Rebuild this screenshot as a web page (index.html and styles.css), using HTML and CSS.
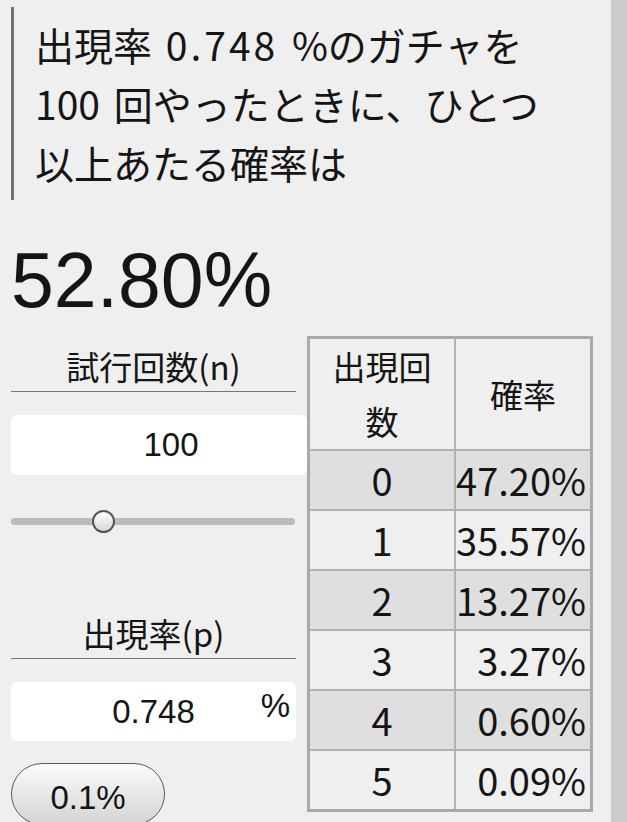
FILE: index.html
```html
<!DOCTYPE html>
<html lang="ja">
<head>
<meta charset="utf-8">
<title>ガチャ確率計算</title>
<link rel="stylesheet" href="styles.css">
</head>
<body>
<div class="page">
  <div class="main">
    <blockquote class="question">出現率 <span class="num">0.748</span> %のガチャを<br>100 回やったときに、ひとつ<br>以上あたる確率は</blockquote>
    <div class="result">52.80%</div>
    <div class="panel">
      <div class="controls">
        <div class="label">試行回数(n)</div>
        <div class="field field-n"><input type="text" value="100"></div>
        <input type="range" class="slider" min="10" max="300" value="100">
        <div class="label label-p">出現率(p)</div>
        <div class="field field-p"><input type="text" value="0.748"><span class="unit">%</span></div>
        <button class="preset">0.1%</button>
      </div>
      <table class="dist">
        <tr class="head">
          <th class="col-k">出現回<br>数</th>
          <th>確率</th>
        </tr>
        <tr class="alt"><td class="col-k">0</td><td class="prob">47.20%</td></tr>
        <tr><td class="col-k">1</td><td class="prob">35.57%</td></tr>
        <tr class="alt"><td class="col-k">2</td><td class="prob">13.27%</td></tr>
        <tr><td class="col-k">3</td><td class="prob">3.27%</td></tr>
        <tr class="alt"><td class="col-k">4</td><td class="prob">0.60%</td></tr>
        <tr><td class="col-k">5</td><td class="prob">0.09%</td></tr>
      </table>
    </div>
  </div>
  <div class="rail"></div>
</div>
</body>
</html>
```

FILE: styles.css
```css
body{margin:0;padding:0;background:#efefef;color:#151515;font-family:"Noto Sans CJK JP",sans-serif;}
.page{display:flex;min-height:822px;overflow:hidden;}
.main{flex:1;padding-left:11px;}
.rail{width:16px;background:#cbcbcb;}

.question{margin:7px 0 0 0;padding:8px 0 8px 21px;border-left:3px solid #707070;font-size:39px;line-height:59px;word-spacing:5px;}
.question .num{letter-spacing:3px;}
.result{font-family:"Liberation Sans",sans-serif;font-size:77px;line-height:77px;margin-top:42px;}

.panel{display:flex;gap:11px;margin-top:17px;align-items:flex-start;}
.controls{width:285px;}
.label{height:55px;line-height:60px;border-bottom:1px solid #777;text-align:center;font-size:33px;}
.label-p{margin-top:70px;}

.field{display:flex;align-items:center;height:60px;margin-top:23px;background:#fff;border-radius:6px;box-sizing:border-box;}
.field input{flex:1;min-width:0;border:0;padding:0;background:transparent;outline:none;text-align:center;color:#151515;font-family:"Liberation Sans",sans-serif;font-size:33px;}
.field-n{width:296px;padding-left:24px;}
.field-p{height:59px;padding:0 6px 0 36px;}
.unit{width:30px;font-family:"Liberation Sans",sans-serif;font-size:33px;text-align:right;margin-top:-12px;}

.slider{-webkit-appearance:none;appearance:none;display:block;width:284px;height:24px;margin:34px 0 0 0;padding:0;background:transparent;}
.slider::-webkit-slider-runnable-track{height:7px;background:#bcbcbc;border-radius:4px;}
.slider::-webkit-slider-thumb{-webkit-appearance:none;width:23px;height:23px;margin-top:-8px;box-sizing:border-box;border:2px solid #555;border-radius:50%;background:linear-gradient(#fdfdfd,#d9d9d9);}

.preset{display:block;width:154px;height:62px;margin-top:22px;padding:8px 0 0 0;border:1.5px solid #5a5a5a;border-radius:31px;background:linear-gradient(#fcfcfc,#d4d4d4);color:#151515;font-family:"Liberation Sans",sans-serif;font-size:33px;}

.dist{width:286px;border-collapse:collapse;border:3px solid #a9a9a9;}
.dist th,.dist td{border:2px solid #b3b3b3;padding:0;font-weight:normal;}
.dist th{height:110px;font-size:33px;line-height:55px;text-align:center;}
.dist td{height:58px;font-size:38px;line-height:40px;}
.dist .col-k{width:144px;text-align:center;}
.dist .prob{text-align:right;padding-right:4px;}
.dist tr.alt td{background:#dfdfdf;}
```
